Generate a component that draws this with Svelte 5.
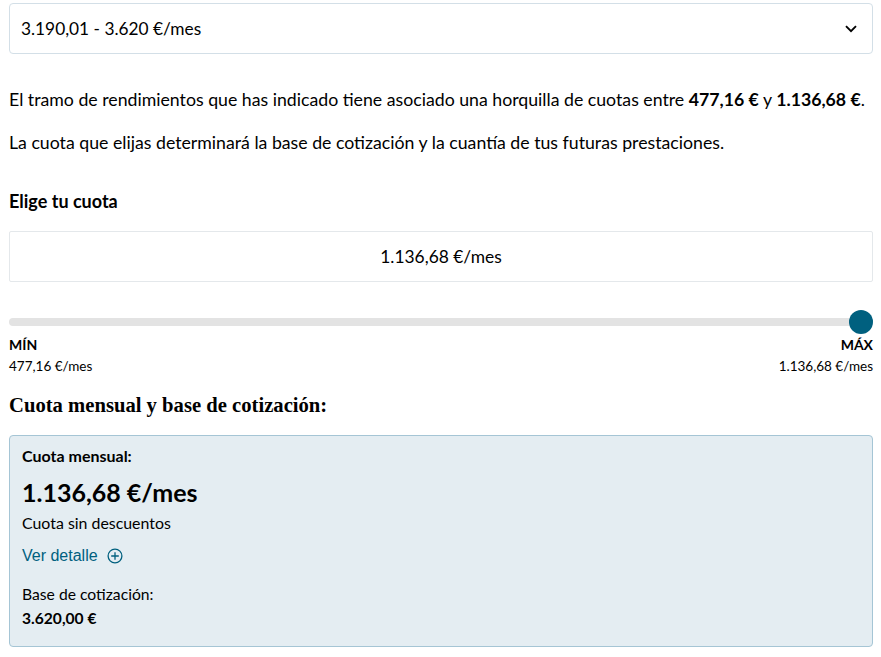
<script>
    let selected = "3.190,01 - 3.620 €/mes";
    let min = "477,16 €";
    let max = "1.136,68 €";
</script>

<div class="page">
    <div class="select">
        <span>{selected}</span>
        <svg width="12" height="8" viewBox="0 0 12 8"><path d="M1 1.2l5 5 5-5" fill="none" stroke="#000" stroke-width="1.9"/></svg>
    </div>

    <p class="intro">El tramo de rendimientos que has indicado tiene asociado una horquilla de cuotas entre <b>{min}</b> y <b>{max}</b>.</p>
    <p class="intro second">La cuota que elijas determinará la base de cotización y la cuantía de tus futuras prestaciones.</p>

    <h3>Elige tu cuota</h3>
    <div class="amount">{max}/mes</div>

    <div class="track"><span class="thumb"></span></div>
    <div class="limits">
        <div><strong>MÍN</strong><small>{min}/mes</small></div>
        <div class="right"><strong>MÁX</strong><small>{max}/mes</small></div>
    </div>

    <h2>Cuota mensual y base de cotización:</h2>

    <div class="card">
        <h4>Cuota mensual:</h4>
        <div class="big">{max}/mes</div>
        <div class="note">Cuota sin descuentos</div>
        <div class="link">
            Ver detalle
            <svg width="16" height="16" viewBox="0 0 16 16" fill="none" stroke="#00607f" stroke-width="1.3"><circle cx="8" cy="8" r="6.9"/><path d="M8 4.2v7.6M4.2 8h7.6"/></svg>
        </div>
        <div class="base">Base de cotización:</div>
        <b class="basevalue">3.620,00 €</b>
    </div>
</div>

<style>
    :global(body){
        background: #fff;
    }
    .page{
        box-sizing: border-box;
        width: 881px;
        height: 657px;
        padding: 3px 8px 0 9px;
        font-family: Lato, sans-serif;
        color: #000;
        overflow: hidden;
    }
    .select{
        box-sizing: border-box;
        height: 51px;
        display: flex;
        align-items: center;
        justify-content: space-between;
        padding: 0 15px 0 11px;
        border: 1px solid #d3dfe7;
        border-radius: 4px;
        font-size: 17.3px;
    }
    .intro{
        margin: 35px 0 0 0;
        font-size: 17.72px;
        line-height: 22px;
        white-space: nowrap;
    }
    .second{
        margin-top: 21px;
    }
    h3{
        margin: 36px 0 0 0;
        font-size: 18px;
        line-height: 22px;
        font-weight: 700;
    }
    .amount{
        box-sizing: border-box;
        height: 51px;
        margin-top: 19px;
        display: flex;
        align-items: center;
        justify-content: center;
        border: 1px solid #e4e8eb;
        border-radius: 2px;
        font-size: 17.4px;
    }
    .track{
        position: relative;
        height: 8px;
        margin-top: 36px;
        background: #e3e3e3;
        border-radius: 4px;
    }
    .thumb{
        position: absolute;
        right: 0;
        top: -8px;
        width: 24px;
        height: 24px;
        border-radius: 50%;
        background: #00607f;
    }
    .limits{
        display: flex;
        justify-content: space-between;
        margin-top: 9px;
    }
    .limits div{
        display: flex;
        flex-direction: column;
    }
    .right{
        align-items: flex-end;
    }
    strong{
        font-size: 14px;
        line-height: 20px;
        font-weight: 700;
    }
    small{
        font-size: 13.5px;
        line-height: 22px;
    }
    h2{
        margin: 15px 0 0 0;
        font-family: "Liberation Serif", serif;
        font-size: 20.65px;
        line-height: 26px;
        font-weight: 700;
    }
    .card{
        box-sizing: border-box;
        height: 212px;
        margin-top: 17px;
        padding: 10px 12px;
        background: #e4edf2;
        border: 1px solid #a5c5d5;
        border-radius: 4px;
    }
    h4{
        margin: 0;
        font-size: 16px;
        line-height: 20px;
        font-weight: 700;
    }
    .big{
        margin-top: 10px;
        font-size: 25px;
        line-height: 32px;
        font-weight: 700;
    }
    .note{
        margin-top: 5px;
        font-size: 15.9px;
        line-height: 20px;
    }
    .link{
        display: flex;
        align-items: center;
        gap: 9px;
        margin-top: 13px;
        font-family: "Liberation Sans", sans-serif;
        font-size: 16px;
        line-height: 20px;
        color: #00607f;
    }
    .base{
        margin-top: 18px;
        font-size: 15.7px;
        line-height: 20px;
    }
    .basevalue{
        display: block;
        margin-top: 4px;
        font-size: 15.6px;
        line-height: 20px;
    }
</style>
